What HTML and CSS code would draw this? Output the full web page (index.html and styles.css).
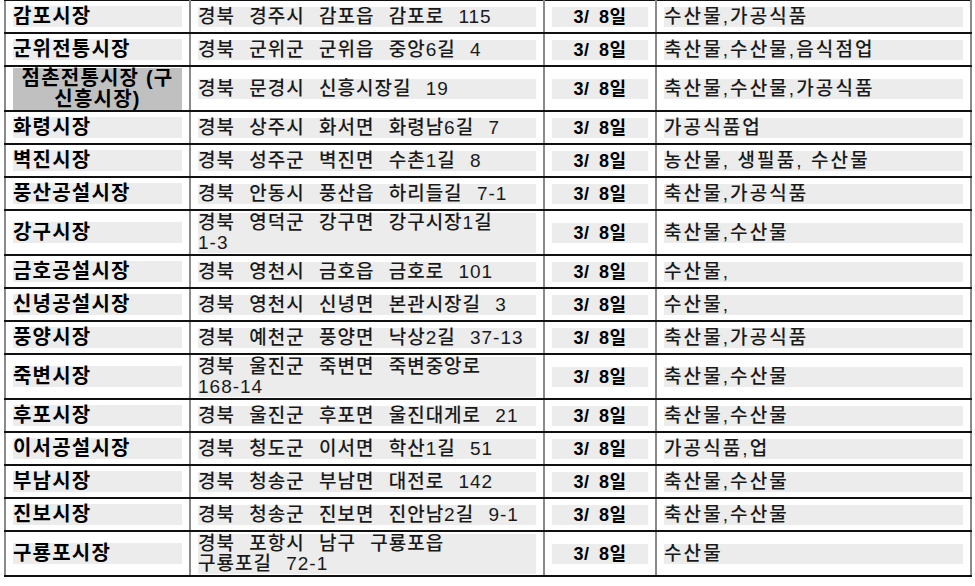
FILE: index.html
```html
<!DOCTYPE html>
<html lang="ko">
<head>
<meta charset="utf-8">
<title>전통시장 목록</title>
<link rel="stylesheet" href="styles.css">
</head>
<body>
<table class="market-table">
  <colgroup>
    <col class="c-name">
    <col class="c-addr">
    <col class="c-date">
    <col class="c-type">
  </colgroup>
  <tbody>
    <tr><td class="name"><div class="box">감포시장</div></td><td class="addr"><div class="box">경북 경주시 감포읍 감포로 115</div></td><td class="date"><div class="box">3/ 8일</div></td><td class="type"><div class="box">수산물,가공식품</div></td></tr>
    <tr><td class="name"><div class="box">군위전통시장</div></td><td class="addr"><div class="box">경북 군위군 군위읍 중앙6길 4</div></td><td class="date"><div class="box">3/ 8일</div></td><td class="type"><div class="box">축산물,수산물,음식점업</div></td></tr>
    <tr class="tall"><td class="name"><div class="box box-dark">점촌전통시장 (구<br>신흥시장)</div></td><td class="addr"><div class="box">경북 문경시 신흥시장길 19</div></td><td class="date"><div class="box">3/ 8일</div></td><td class="type"><div class="box">축산물,수산물,가공식품</div></td></tr>
    <tr><td class="name"><div class="box">화령시장</div></td><td class="addr"><div class="box">경북 상주시 화서면 화령남6길 7</div></td><td class="date"><div class="box">3/ 8일</div></td><td class="type"><div class="box">가공식품업</div></td></tr>
    <tr><td class="name"><div class="box">벽진시장</div></td><td class="addr"><div class="box">경북 성주군 벽진면 수촌1길 8</div></td><td class="date"><div class="box">3/ 8일</div></td><td class="type"><div class="box">농산물, 생필품, 수산물</div></td></tr>
    <tr><td class="name"><div class="box">풍산공설시장</div></td><td class="addr"><div class="box">경북 안동시 풍산읍 하리들길 7-1</div></td><td class="date"><div class="box">3/ 8일</div></td><td class="type"><div class="box">축산물,가공식품</div></td></tr>
    <tr class="tall"><td class="name"><div class="box">강구시장</div></td><td class="addr"><div class="box">경북 영덕군 강구면 강구시장1길<br>1-3</div></td><td class="date"><div class="box">3/ 8일</div></td><td class="type"><div class="box">축산물,수산물</div></td></tr>
    <tr><td class="name"><div class="box">금호공설시장</div></td><td class="addr"><div class="box">경북 영천시 금호읍 금호로 101</div></td><td class="date"><div class="box">3/ 8일</div></td><td class="type"><div class="box">수산물,</div></td></tr>
    <tr><td class="name"><div class="box">신녕공설시장</div></td><td class="addr"><div class="box">경북 영천시 신녕면 본관시장길 3</div></td><td class="date"><div class="box">3/ 8일</div></td><td class="type"><div class="box">수산물,</div></td></tr>
    <tr><td class="name"><div class="box">풍양시장</div></td><td class="addr"><div class="box">경북 예천군 풍양면 낙상2길 37-13</div></td><td class="date"><div class="box">3/ 8일</div></td><td class="type"><div class="box">축산물,가공식품</div></td></tr>
    <tr class="tall"><td class="name"><div class="box">죽변시장</div></td><td class="addr"><div class="box">경북 울진군 죽변면 죽변중앙로<br>168-14</div></td><td class="date"><div class="box">3/ 8일</div></td><td class="type"><div class="box">축산물,수산물</div></td></tr>
    <tr><td class="name"><div class="box">후포시장</div></td><td class="addr"><div class="box">경북 울진군 후포면 울진대게로 21</div></td><td class="date"><div class="box">3/ 8일</div></td><td class="type"><div class="box">축산물,수산물</div></td></tr>
    <tr><td class="name"><div class="box">이서공설시장</div></td><td class="addr"><div class="box">경북 청도군 이서면 학산1길 51</div></td><td class="date"><div class="box">3/ 8일</div></td><td class="type"><div class="box">가공식품,업</div></td></tr>
    <tr><td class="name"><div class="box">부남시장</div></td><td class="addr"><div class="box">경북 청송군 부남면 대전로 142</div></td><td class="date"><div class="box">3/ 8일</div></td><td class="type"><div class="box">축산물,수산물</div></td></tr>
    <tr><td class="name"><div class="box">진보시장</div></td><td class="addr"><div class="box">경북 청송군 진보면 진안남2길 9-1</div></td><td class="date"><div class="box">3/ 8일</div></td><td class="type"><div class="box">축산물,수산물</div></td></tr>
    <tr class="tall"><td class="name"><div class="box">구룡포시장</div></td><td class="addr"><div class="box">경북 포항시 남구 구룡포읍<br>구룡포길 72-1</div></td><td class="date"><div class="box">3/ 8일</div></td><td class="type"><div class="box">수산물</div></td></tr>
  </tbody>
</table>
</body>
</html>
```

FILE: styles.css
```css
body {
  margin: 0;
  background: #ffffff;
  font-family: "Liberation Sans", "Noto Sans CJK KR", sans-serif;
  color: #000;
}

.market-table {
  border-collapse: collapse;
  table-layout: fixed;
  width: 966px;
  margin: -1px 0 0 4px;
}

.c-name { width: 185px; }
.c-addr { width: 354px; }
.c-date { width: 112px; }
.c-type { width: 315px; }

.market-table tr {
  height: 33px;
}

.market-table tr.tall {
  height: 45px;
}

.market-table td {
  border-left: 2px solid #8a8a8a;
  border-right: 2px solid #8a8a8a;
  border-top: 2px solid #111;
  border-bottom: 2px solid #111;
  padding: 0 7px;
  vertical-align: middle;
}

.box {
  background: #ececec;
  line-height: 20px;
  white-space: nowrap;
}

.name .box {
  font-size: 20px;
  font-weight: bold;
  letter-spacing: 1.2px;
  line-height: 21px;
  color: #000;
}

.box-dark {
  background: #c0c0c0;
  text-align: center;
}

.addr .box {
  font-size: 19px;
  font-weight: 500;
  letter-spacing: 1px;
  word-spacing: 8px;
  color: #1a1a1a;
}

.date .box {
  font-size: 18px;
  font-weight: bold;
  letter-spacing: 0.5px;
  word-spacing: 4px;
  text-align: center;
  color: #000;
}

.type .box {
  font-size: 19px;
  font-weight: 500;
  letter-spacing: 2.1px;
  color: #1a1a1a;
}
```
